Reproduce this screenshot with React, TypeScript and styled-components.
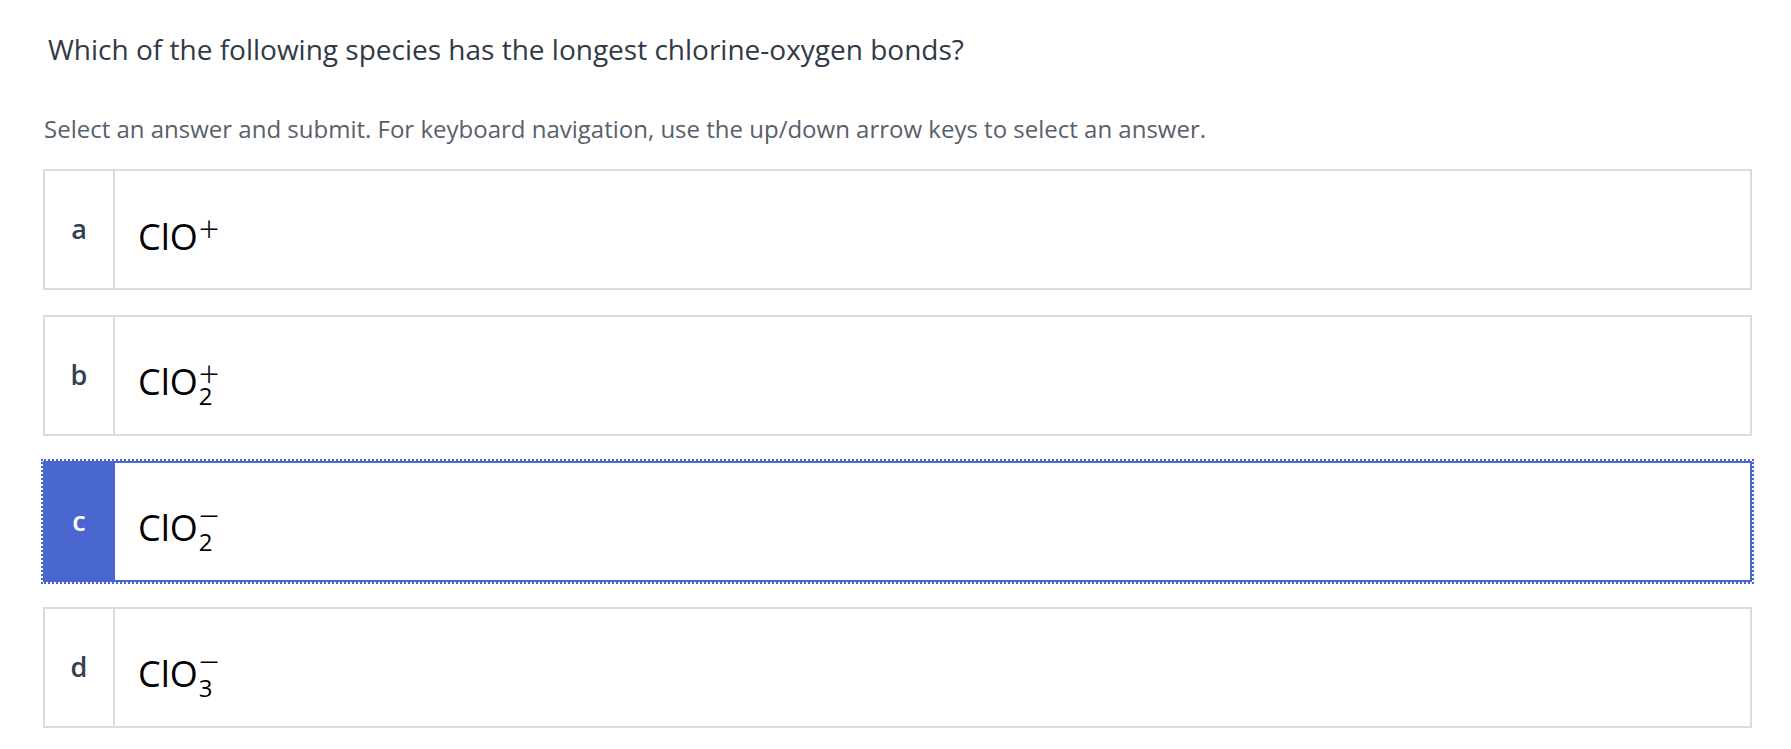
import React from "react";
import styled, { createGlobalStyle, css } from "styled-components";

const GlobalStyle = createGlobalStyle`
  html, body {
    margin: 0;
    padding: 0;
    background: #ffffff;
  }
  body {
    font-family: "Open Sans", "Noto Sans", sans-serif;
  }
`;

const Page = styled.main`
  padding: 32px 39px 0 43px;
`;

const Question = styled.h2`
  margin: 0 0 49px 5px;
  font-size: 28px;
  line-height: 34px;
  font-weight: 400;
  color: #2f3a46;
  white-space: nowrap;
`;

const Instructions = styled.p`
  margin: 0 0 26px 1px;
  font-size: 24px;
  line-height: 28px;
  color: #57606b;
  white-space: nowrap;
`;

const Choices = styled.div`
  display: flex;
  flex-direction: column;
  gap: 25px;
`;

const Choice = styled.div<{ $selected?: boolean }>`
  display: flex;
  height: 121px;
  box-sizing: border-box;
  border: 2px solid #d8dce1;
  background: #ffffff;
  cursor: pointer;
  ${(p) =>
    p.$selected &&
    css`
      border-color: #4a67d1;
      outline: 2px dotted #4a67d1;
      outline-offset: 0;
    `}
`;

const Letter = styled.div<{ $selected?: boolean }>`
  width: 68px;
  flex: none;
  display: flex;
  align-items: center;
  justify-content: center;
  border-right: 2px solid ${(p) => (p.$selected ? "#4a67d1" : "#d8dce1")};
  background: ${(p) => (p.$selected ? "#4a67d1" : "transparent")};
  color: ${(p) => (p.$selected ? "#ffffff" : "#334051")};
  font-size: 27px;
  font-weight: 600;
  padding-bottom: 2px;
`;

const Answer = styled.div`
  flex: 1;
  display: flex;
  align-items: center;
  padding: 14px 0 0 23px;
`;

const Formula = styled.span`
  display: inline-flex;
  align-items: flex-start;
  color: #000000;
`;

const Main = styled.span`
  font-size: 36px;
  line-height: 44px;
`;

const Scripts = styled.span`
  display: inline-flex;
  flex-direction: column;
  margin-left: 1px;
`;

const Charge = styled.span<{ $minus?: boolean }>`
  font-size: 36px;
  font-weight: 300;
  line-height: 20px;
  height: 20px;
  padding-top: ${(p) => (p.$minus ? "0" : "4px")};
  padding-bottom: ${(p) => (p.$minus ? "4px" : "0")};
`;

const Count = styled.span`
  font-size: 24px;
  line-height: 20px;
  margin-top: 2px;
`;

type Option = {
  key: string;
  sign: "+" | "−";
  count?: string;
};

const options: Option[] = [
  { key: "a", sign: "+" },
  { key: "b", sign: "+", count: "2" },
  { key: "c", sign: "−", count: "2" },
  { key: "d", sign: "−", count: "3" },
];

const selected = "c";

export default function App() {
  return (
    <>
      <GlobalStyle />
      <Page>
        <Question>
          Which of the following species has the longest chlorine-oxygen bonds?
        </Question>
        <Instructions>
          Select an answer and submit. For keyboard navigation, use the up/down
          arrow keys to select an answer.
        </Instructions>
        <Choices role="radiogroup">
          {options.map((o) => (
            <Choice
              key={o.key}
              role="radio"
              aria-checked={o.key === selected}
              $selected={o.key === selected}
            >
              <Letter $selected={o.key === selected}>{o.key}</Letter>
              <Answer>
                <Formula>
                  <Main>ClO</Main>
                  <Scripts>
                    <Charge $minus={o.sign === "−"}>{o.sign}</Charge>
                    {o.count && <Count>{o.count}</Count>}
                  </Scripts>
                </Formula>
              </Answer>
            </Choice>
          ))}
        </Choices>
      </Page>
    </>
  );
}
